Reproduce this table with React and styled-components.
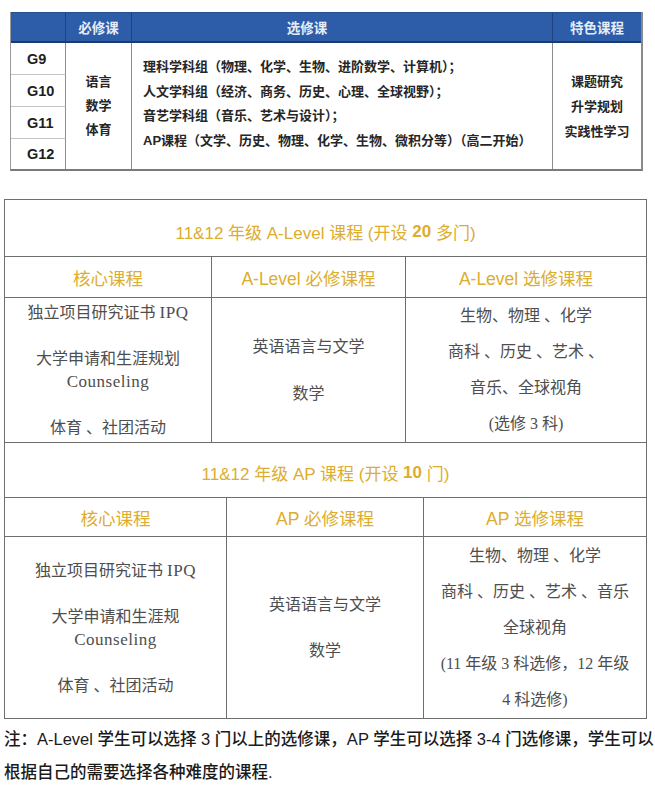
import React from 'react';
import styled, { createGlobalStyle } from 'styled-components';

const Global = createGlobalStyle`
  html, body { margin: 0; padding: 0; background: #ffffff; }
  body { font-family: "Liberation Sans", "Noto Sans CJK SC", sans-serif; }
`;

const Page = styled.div`
  width: 655px;
  height: 795px;
  overflow: hidden;
  box-sizing: border-box;
  padding-top: 12px;
  display: flex;
  flex-direction: column;
  align-items: flex-start;
`;

/* ---------- top table ---------- */
const TopTable = styled.div`
  margin-left: 10px;
  width: 633px;
  box-sizing: border-box;
  display: grid;
  grid-template-columns: 55px 66px 421px 1fr;
  grid-template-rows: 31px 32px 32px 32px 30px;
  border-left: 1px solid #9a9a9a;
  border-right: 2px solid #8a8a8a;
  border-bottom: 2px solid #7a7a7a;
  font-family: "Liberation Sans", "Noto Sans CJK SC", sans-serif;
  color: #222;
  font-size: 13px;
  font-weight: 500;
`;

const HeadCell = styled.div`
  background: #2d5ca8;
  border-top: 1px solid #24508f;
  border-bottom: 2px solid #1b3a70;
  border-right: ${p => (p.$last ? 'none' : '1px solid #1d427c')};
  color: #e6ecf6;
  font-size: 13.5px;
  font-weight: 600;
  display: flex;
  align-items: center;
  justify-content: center;
  box-sizing: border-box;
  padding-right: ${p => p.$shift || 0}px;
`;

const GradeCell = styled.div`
  grid-column: 1;
  grid-row: ${p => p.$row};
  border-right: 1px solid #8c8c8c;
  border-bottom: ${p => (p.$last ? 'none' : '1px solid #c4c4c4')};
  display: flex;
  align-items: center;
  padding-left: 16px;
  font-size: 14.5px;
  font-weight: 700;
  color: #1e1e1e;
  box-sizing: border-box;
`;

const SpanCell = styled.div`
  grid-column: ${p => p.$col};
  grid-row: 2 / span 4;
  border-right: ${p => (p.$last ? 'none' : '1px solid #8c8c8c')};
  display: flex;
  flex-direction: column;
  justify-content: center;
  align-items: ${p => (p.$left ? 'flex-start' : 'center')};
  padding-left: ${p => (p.$left ? '11px' : '0')};
  padding-bottom: ${p => p.$lift || 0}px;
  line-height: ${p => p.$lh || 24.5}px;
  font-weight: 600;
  color: #262626;
  box-sizing: border-box;
`;

const Line = styled.div`
  white-space: nowrap;
`;

/* ---------- second table ---------- */
const Sheet = styled.div`
  margin: 28px 0 0 4px;
  width: 643px;
  box-sizing: border-box;
  border: 1px solid #6e6e6e;
  display: flex;
  flex-direction: column;
`;

const TitleRow = styled.div`
  height: ${p => p.$h}px;
  box-sizing: border-box;
  border-bottom: 1px solid #6e6e6e;
  display: flex;
  align-items: center;
  justify-content: center;
  padding-top: ${p => p.$drop}px;
  color: #dcad2e;
  font-size: 17px;
  font-family: "Liberation Sans", "Noto Sans CJK SC", sans-serif;
  white-space: nowrap;
`;

const Strong = styled.span`
  font-weight: 700;
`;

const Grid3 = styled.div`
  display: grid;
  grid-template-columns: ${p => p.$cols};
  height: ${p => p.$h}px;
  box-sizing: border-box;
  border-bottom: ${p => (p.$last ? 'none' : '1px solid #6e6e6e')};
`;

const HeadLabel = styled.div`
  border-right: ${p => (p.$last ? 'none' : '1px solid #6e6e6e')};
  display: flex;
  align-items: center;
  justify-content: center;
  color: #dcad2e;
  font-size: 17.5px;
  font-family: "Liberation Sans", "Noto Sans CJK SC", sans-serif;
  white-space: nowrap;
`;

const BodyCell = styled.div`
  border-right: ${p => (p.$last ? 'none' : '1px solid #6e6e6e')};
  display: flex;
  flex-direction: column;
  justify-content: center;
  align-items: center;
  line-height: ${p => p.$lh}px;
  padding-bottom: ${p => p.$lift || 0}px;
  font-family: "Liberation Serif", "Noto Sans CJK SC", serif;
  font-size: 16px;
  color: #4e4e4e;
  box-sizing: border-box;
`;

const Latin = styled.span`
  font-size: 17px;
  letter-spacing: 0.5px;
`;

const Note = styled.div`
  margin: 4px 0 0 4px;
  font-family: "Liberation Sans", "Noto Sans CJK SC", sans-serif;
  font-size: 16.5px;
  line-height: 33px;
  color: #1a1a1a;
  font-weight: 500;
`;

const ALEVEL = '207px 194px 1fr';
const APCOLS = '222px 197px 1fr';

const Blank = () => <Line>&nbsp;</Line>;

export default function App() {
  return (
    <Page>
      <Global />
      <TopTable>
        <HeadCell />
        <HeadCell>必修课</HeadCell>
        <HeadCell $shift={70}>选修课</HeadCell>
        <HeadCell $last>特色课程</HeadCell>

        <GradeCell $row={2}>G9</GradeCell>
        <GradeCell $row={3}>G10</GradeCell>
        <GradeCell $row={4}>G11</GradeCell>
        <GradeCell $row={5} $last>G12</GradeCell>

        <SpanCell $col={2} $lh={24}>
          <Line>语言</Line>
          <Line>数学</Line>
          <Line>体育</Line>
        </SpanCell>
        <SpanCell $col={3} $left $lift={4}>
          <Line>理科学科组（物理、化学、生物、进阶数学、计算机）；</Line>
          <Line>人文学科组（经济、商务、历史、心理、全球视野）；</Line>
          <Line>音艺学科组（音乐、艺术与设计）；</Line>
          <Line>AP课程（文学、历史、物理、化学、生物、微积分等）（高二开始）</Line>
        </SpanCell>
        <SpanCell $col={4} $last $lh={25}>
          <Line>课题研究</Line>
          <Line>升学规划</Line>
          <Line>实践性学习</Line>
        </SpanCell>
      </TopTable>

      <Sheet>
        <TitleRow $h={57} $drop={7}>
          11&amp;12 年级 A-Level 课程 (开设 <Strong>&nbsp;20&nbsp;</Strong> 多门)
        </TitleRow>
        <Grid3 $cols={ALEVEL} $h={41}>
          <HeadLabel>核心课程</HeadLabel>
          <HeadLabel>A-Level 必修课程</HeadLabel>
          <HeadLabel $last>A-Level 选修课程</HeadLabel>
        </Grid3>
        <Grid3 $cols={ALEVEL} $h={145}>
          <BodyCell $lh={23} $lift={1}>
            <Line>独立项目研究证书 <Latin>IPQ</Latin></Line>
            <Blank />
            <Line>大学申请和生涯规划</Line>
            <Line><Latin>Counseling</Latin></Line>
            <Blank />
            <Line>体育 、社团活动</Line>
          </BodyCell>
          <BodyCell $lh={23.5}>
            <Line>英语语言与文学</Line>
            <Blank />
            <Line>数学</Line>
          </BodyCell>
          <BodyCell $last $lh={36}>
            <Line>生物、物理 、化学</Line>
            <Line>商科 、历史 、艺术 、</Line>
            <Line>音乐、全球视角</Line>
            <Line>(选修 3 科)</Line>
          </BodyCell>
        </Grid3>

        <TitleRow $h={55} $drop={5}>
          11&amp;12 年级 AP 课程 (开设 <Strong>&nbsp;10&nbsp;</Strong>门)
        </TitleRow>
        <Grid3 $cols={APCOLS} $h={39}>
          <HeadLabel>核心课程</HeadLabel>
          <HeadLabel>AP 必修课程</HeadLabel>
          <HeadLabel $last>AP 选修课程</HeadLabel>
        </Grid3>
        <Grid3 $cols={APCOLS} $h={181} $last>
          <BodyCell $lh={23}>
            <Line>独立项目研究证书 <Latin>IPQ</Latin></Line>
            <Blank />
            <Line>大学申请和生涯规</Line>
            <Line><Latin>Counseling</Latin></Line>
            <Blank />
            <Line>体育 、社团活动</Line>
          </BodyCell>
          <BodyCell $lh={23}>
            <Line>英语语言与文学</Line>
            <Blank />
            <Line>数学</Line>
          </BodyCell>
          <BodyCell $last $lh={36}>
            <Line>生物、物理 、化学</Line>
            <Line>商科 、历史 、艺术 、音乐</Line>
            <Line>全球视角</Line>
            <Line>(11 年级 3 科选修，12 年级</Line>
            <Line>4 科选修)</Line>
          </BodyCell>
        </Grid3>
      </Sheet>

      <Note>
        <Line>注：A-Level 学生可以选择 3 门以上的选修课，AP 学生可以选择 3-4 门选修课，学生可以</Line>
        <Line>根据自己的需要选择各种难度的课程.</Line>
      </Note>
    </Page>
  );
}
